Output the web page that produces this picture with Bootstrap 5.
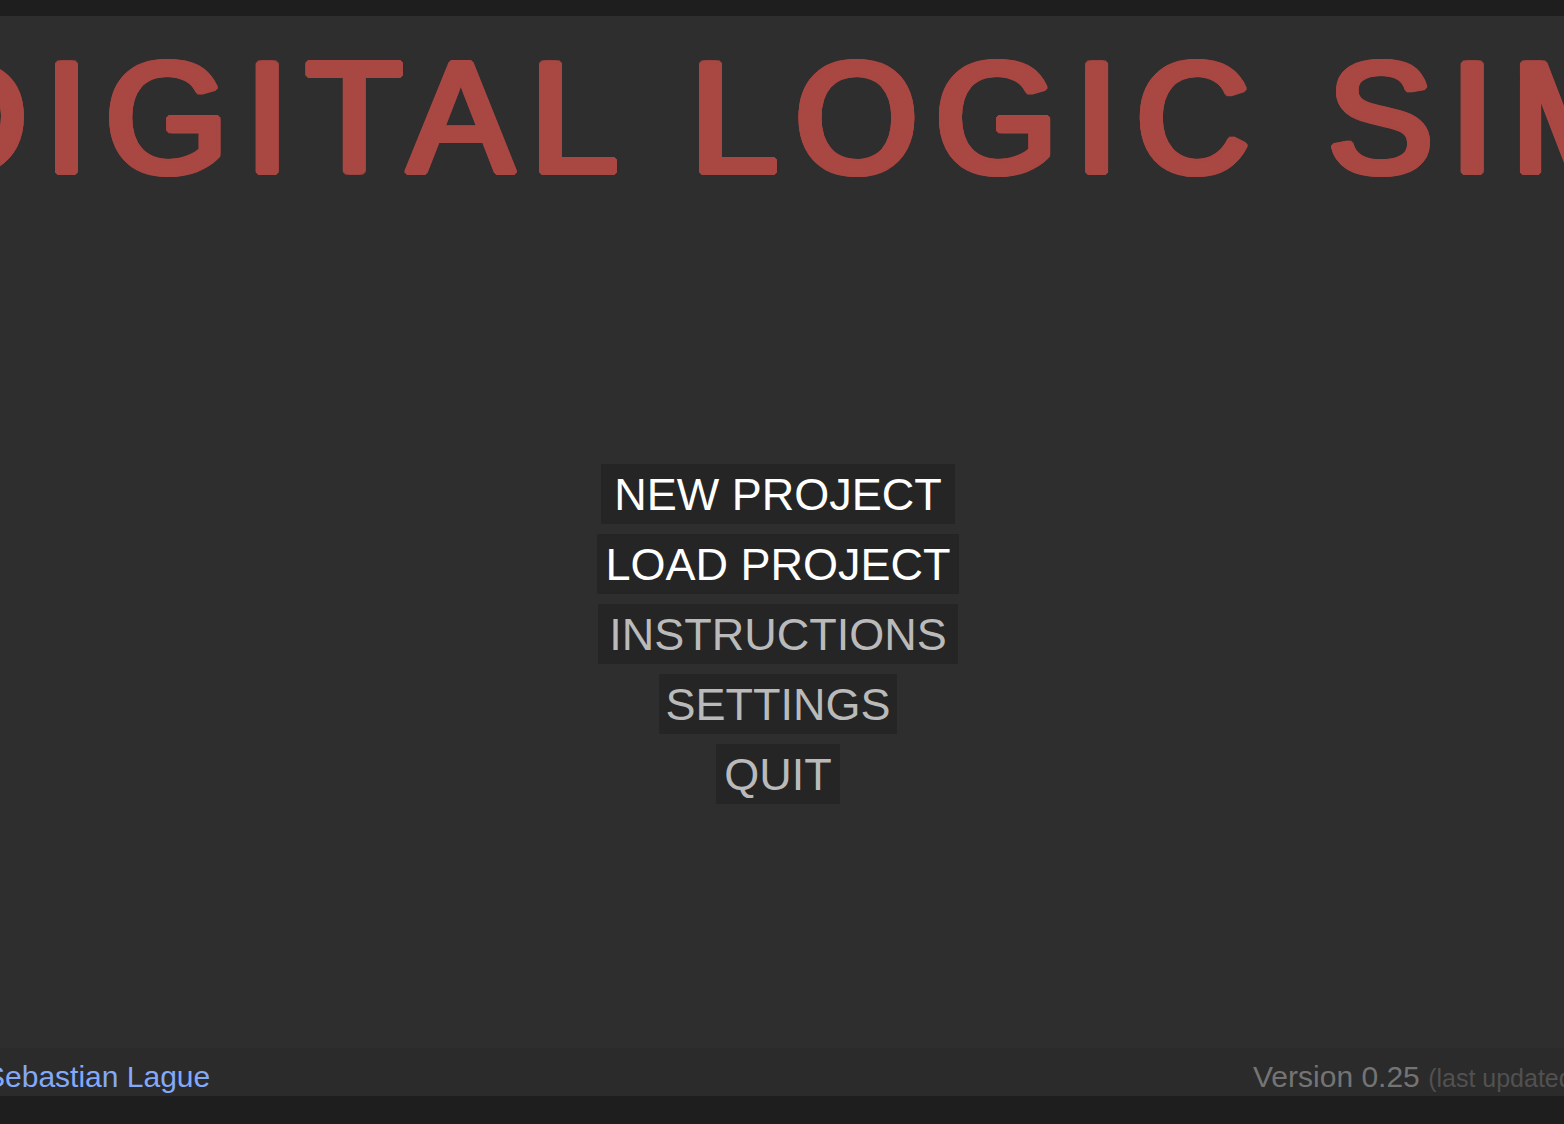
<!DOCTYPE html>
<html lang="en">
<head>
<meta charset="utf-8">
<meta name="viewport" content="width=device-width, initial-scale=1">
<title>Digital Logic Sim</title>
<link rel="stylesheet" href="https://cdn.jsdelivr.net/npm/bootstrap@5.3.0/dist/css/bootstrap.min.css">
<style>
body { background: #2e2e2e; font-family: "Liberation Sans", Arial, sans-serif; }
.top-strip { height: 16px; background: #1e1e1e; }
.bottom-strip { height: 28px; background: #1e1e1e; }
.screen { padding-right: 8px; }
.game-title {
  margin: 11px -17px 0 0; font-size: 158px; line-height: 180px; font-weight: 400;
  letter-spacing: 17px; color: #a94743;
  /* even, round-cornered thickening of the letters */
  text-shadow: 4px 0, -4px 0, 0 3px, 0 -3px, 4px 1px, 4px -1px, -4px 1px, -4px -1px,
    3px 2px, 3px -2px, -3px 2px, -3px -2px, 2px 3px, 2px -3px, -2px 3px, -2px -3px;
}
.menu { gap: 10px; margin-top: 257px; }
.menu-btn {
  height: 60px; padding: 2px 8px 0; border: 0; background: #252525; color: #bababa;
  font-size: 45px; line-height: 58px;
}
.menu-btn.primary { color: #fff; }
.menu-btn.wide { padding-left: 13px; padding-right: 13px; }
.menu-btn.medium { padding-left: 11px; padding-right: 11px; }
.menu-btn.narrow { padding-left: 6px; padding-right: 6px; }
.menu-btn:hover { background: #333; }
.credits { height: 48px; background: #2b2b2b; font-size: 30px; line-height: 58px; color: #747474; }
.author { color: #84a9f8; margin-left: -15px; }
.version { width: 311px; }
.updated { font-size: 25px; color: #515151; }
</style>
<script src="https://cdn.jsdelivr.net/npm/bootstrap@5.3.0/dist/js/bootstrap.bundle.min.js"></script>
</head>
<body class="d-flex flex-column min-vh-100 overflow-hidden">
<div class="top-strip flex-shrink-0"></div>
<main class="screen flex-grow-1 d-flex flex-column align-items-center">
  <h1 class="game-title text-nowrap">DIGITAL LOGIC SIM</h1>
  <nav class="menu d-flex flex-column align-items-center" aria-label="Main menu">
    <button type="button" class="menu-btn primary wide">NEW PROJECT</button>
    <button type="button" class="menu-btn primary">LOAD PROJECT</button>
    <button type="button" class="menu-btn medium">INSTRUCTIONS</button>
    <button type="button" class="menu-btn narrow">SETTINGS</button>
    <button type="button" class="menu-btn">QUIT</button>
  </nav>
</main>
<footer class="flex-shrink-0">
  <div class="credits d-flex justify-content-between text-nowrap overflow-hidden">
    <a href="#" class="author text-decoration-none">Sebastian Lague</a>
    <div class="version">Version 0.25 <span class="updated">(last updated</span></div>
  </div>
  <div class="bottom-strip"></div>
</footer>
</body>
</html>
